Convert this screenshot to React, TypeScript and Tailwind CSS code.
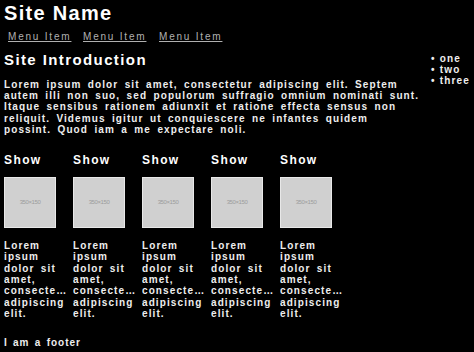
import React from "react";

const cards = [0, 1, 2, 3, 4];

function Placeholder() {
  return (
    <div className="w-[52px] h-[51px] bg-[#d0d0d0] border border-[#e8e8e8] flex items-center justify-center">
      <span className="text-[6px] text-[#9c9c9c] tracking-[-0.4px] font-normal">350×150</span>
    </div>
  );
}

export default function App() {
  return (
    <div
      className="bg-black text-[#eeeeee] w-[474px] h-[352px] overflow-hidden"
      style={{ fontFamily: '"Liberation Sans", Arial, sans-serif' }}
    >
      <header className="pl-[4px] pt-[1px]">
        <h1 className="text-[20px] leading-[24px] font-bold tracking-[1.3px] text-white">Site Name</h1>
        <nav className="flex pl-[4px] mt-[6px] text-[10px] leading-[12px] tracking-[1.8px] text-[#b0b0b0]">
          <a className="underline w-[75px]">Menu Item</a>
          <a className="underline w-[76px]">Menu Item</a>
          <a className="underline">Menu Item</a>
        </nav>
      </header>
      <div className="flex mt-[8px]">
        <main className="w-[424px] pl-[4px]">
          <h2 className="text-[15px] leading-[18px] font-bold tracking-[1.4px] text-white">Site Introduction</h2>
          <p className="mt-[10px] text-[10px] leading-[11.2px] font-bold tracking-[1.1px] [word-spacing:2.5px]">
            Lorem ipsum dolor sit amet, consectetur adipiscing elit. Septem
            <br />
            autem illi non suo, sed populorum suffragio omnium nominati sunt.
            <br />
            Itaque sensibus rationem adiunxit et ratione effecta sensus non
            <br />
            reliquit. Videmus igitur ut conquiescere ne infantes quidem
            <br />
            possint. Quod iam a me expectare noli.
          </p>
          <div className="flex mt-[18px]">
            {cards.map((i) => (
              <div key={i} className="w-[69px]">
                <h3 className="text-[12px] leading-[14px] font-bold tracking-[1.4px] text-white">Show</h3>
                <div className="mt-[10px]">
                  <Placeholder />
                </div>
                <p className="mt-[12px] w-[63px] overflow-hidden text-ellipsis text-[10px] leading-[11.3px] font-bold tracking-[1.1px] [word-spacing:2.5px]">
                  Lorem ipsum dolor sit amet, consectetur, adipiscing elit.
                </p>
              </div>
            ))}
          </div>
          <footer className="mt-[18px] text-[10px] leading-[12px] font-bold tracking-[1px] [word-spacing:1.5px]">I am a footer</footer>
        </main>
        <aside className="pl-[7px] pt-[2px]">
          <ul className="text-[10px] leading-[11px] font-bold tracking-[1.2px]">
            <li>• one</li>
            <li>• two</li>
            <li>• three</li>
          </ul>
        </aside>
      </div>
    </div>
  );
}
